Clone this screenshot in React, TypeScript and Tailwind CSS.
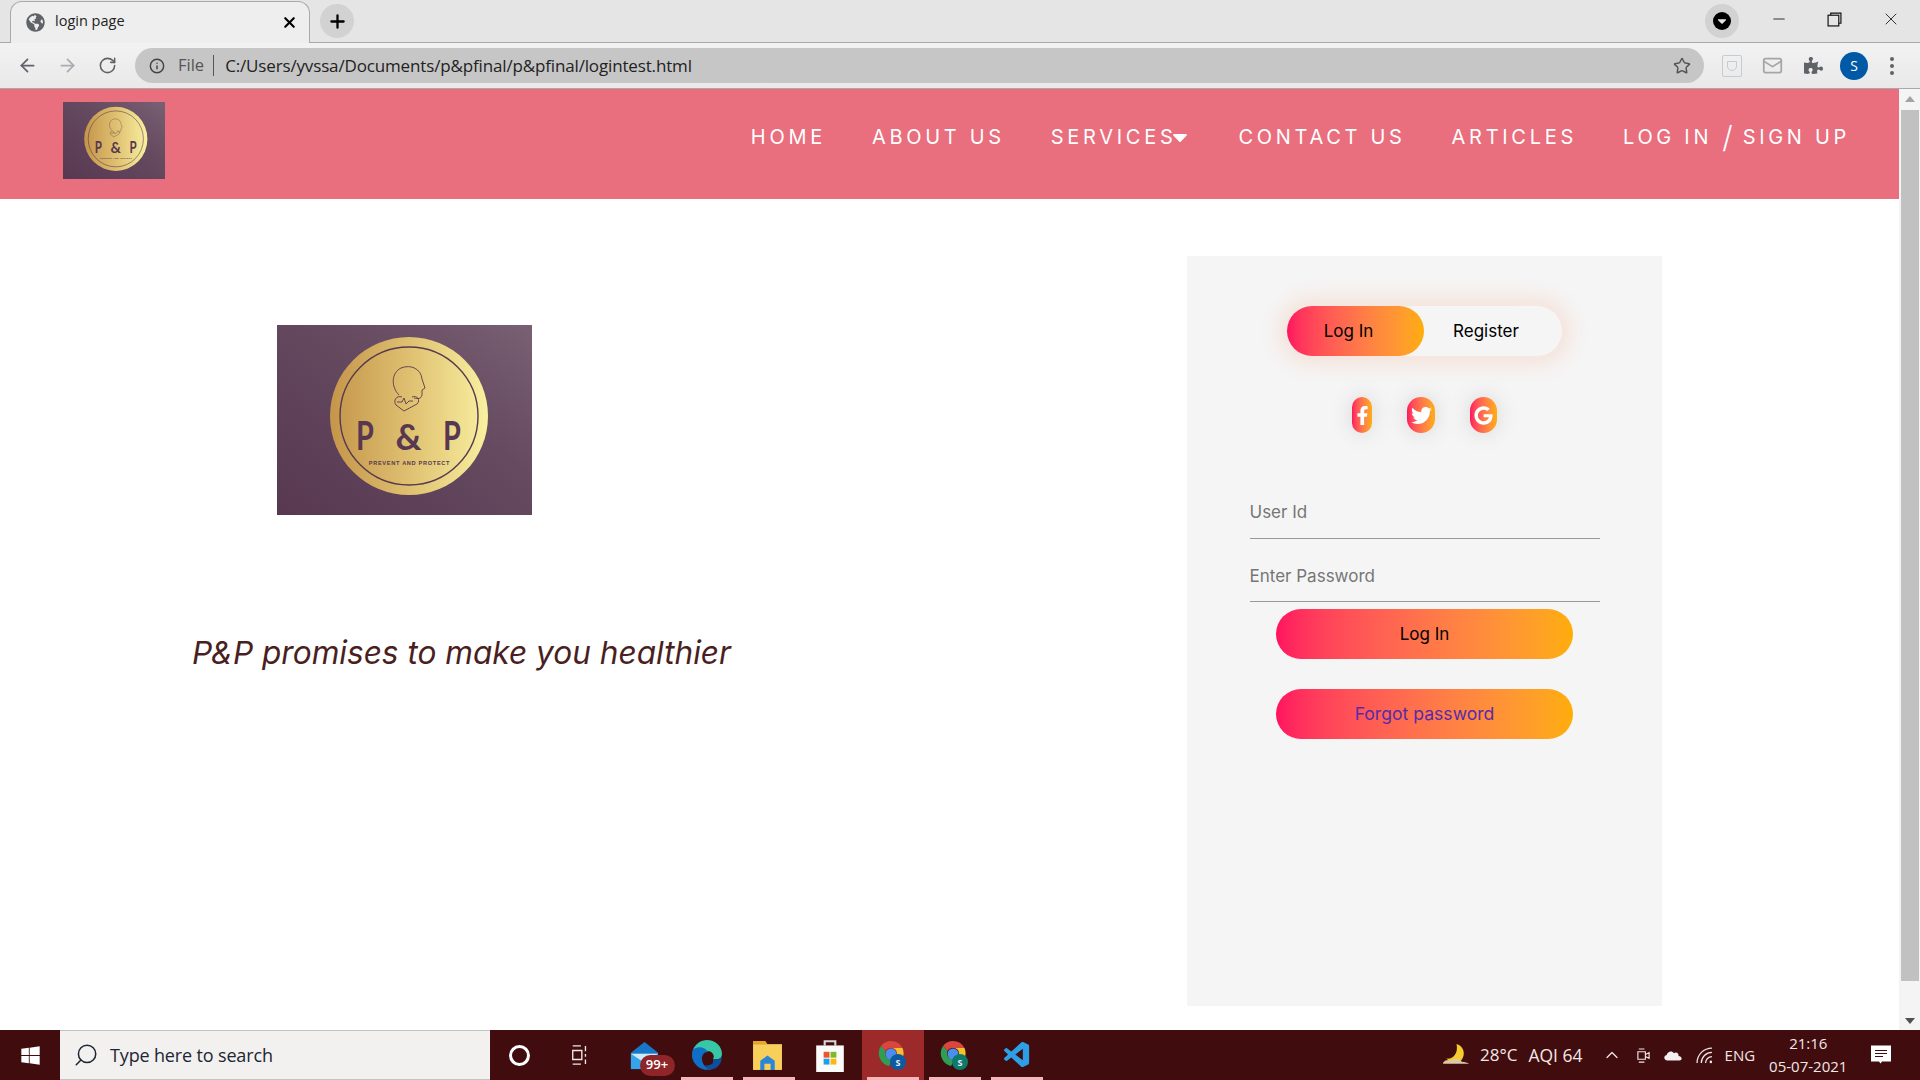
import { ArrowLeft, ArrowRight, Info, Mail, Minus, Plus, RotateCw, Search, Star, X, ChevronUp } from 'lucide-react';
import { FaCaretDown, FaFacebookF, FaGlobeAmericas, FaGoogle, FaPuzzlePiece, FaTwitter, FaWindows } from 'react-icons/fa';
import { VscVscode } from 'react-icons/vsc';

const navLinks = ['HOME', 'ABOUT US', 'SERVICES', 'CONTACT US', 'ARTICLES'];

function Logo({ className }: { className: string }) {
  return (
    <svg viewBox="0 0 255 190" className={className} preserveAspectRatio="none">
      <defs>
        <linearGradient id="logo-bg" x1="0" y1="1" x2="1" y2="0">
          <stop offset="0" stopColor="#573850" />
          <stop offset="0.6" stopColor="#654a60" />
          <stop offset="1" stopColor="#7a6073" />
        </linearGradient>
        <linearGradient id="logo-gold" x1="0" y1="0" x2="1" y2="0">
          <stop offset="0" stopColor="#c4954a" />
          <stop offset="0.5" stopColor="#dfc070" />
          <stop offset="1" stopColor="#f8f0a0" />
        </linearGradient>
      </defs>
      <rect width="255" height="190" fill="url(#logo-bg)" />
      <circle cx="132" cy="91" r="79" fill="url(#logo-gold)" />
      <circle cx="132" cy="91" r="69" fill="none" stroke="#573850" strokeWidth="1.4" />
      <path d="M122 70C114 62 114 48 124 43C134 39 144 44 145 54L148 63L145 65L145 70C144 74 141 74 137 73" fill="none" stroke="#573850" strokeWidth="0.9" />
      <path d="M125 72C119 70 116 76 119 80L127 86L140 79C144 75 140 70 135 72M120 77L125 77L127 73L129 79L132 76L136 76" fill="none" stroke="#573850" strokeWidth="0.9" />
      <text transform="translate(88 125) scale(0.72 1)" textAnchor="middle" fontFamily="Lato, sans-serif" fontWeight="700" fontSize="40" fill="#573850">P</text>
      <text x="131.5" y="125" textAnchor="middle" fontFamily="Lato, sans-serif" fontWeight="700" fontSize="36" fill="#573850">&amp;</text>
      <text transform="translate(175 125) scale(0.72 1)" textAnchor="middle" fontFamily="Lato, sans-serif" fontWeight="700" fontSize="40" fill="#573850">P</text>
      <text x="132.5" y="140" textAnchor="middle" fontFamily="'Liberation Sans', sans-serif" fontWeight="700" fontSize="5.6" letterSpacing="0.7" fill="#573850">PREVENT AND PROTECT</text>
    </svg>
  );
}

function GradientPill({ children, className }: { children: React.ReactNode; className: string }) {
  return (
    <div className={`flex items-center justify-center rounded-[30px] bg-linear-to-r from-[#ff105f] to-[#ffad06] ${className}`}>
      {children}
    </div>
  );
}

function ChromeIcon({ badge }: { badge: string }) {
  return (
    <svg viewBox="0 0 32 32" className="w-[32px] h-[32px]">
      <path d="M14 2A13 13 0 0 1 25.5 9L14 9A6 6 0 0 0 8.5 12L4 7A13 13 0 0 1 14 2Z" fill="#d9473c" />
      <path d="M25.5 9A13 13 0 0 1 19 26L20 14A6 6 0 0 0 14 9Z" fill="#f5c02e" />
      <path d="M4 7A13 13 0 0 0 12 27L16 20A6 6 0 0 1 8.5 12Z" fill="#2f9e55" />
      <circle cx="14" cy="15" r="5.5" fill="#4c8df0" />
      <circle cx="21" cy="23" r="8" fill={badge} />
      <text x="21" y="26.5" textAnchor="middle" fontSize="9" fontWeight="700" fontFamily="'Open Sans', sans-serif" fill="#e8f0f8">S</text>
    </svg>
  );
}

function Slot({ children, underline, active }: { children?: React.ReactNode; underline?: boolean; active?: boolean }) {
  return (
    <div className={`relative flex h-full w-[62px] items-center justify-center ${active ? 'bg-[#9c2a2b]' : ''}`}>
      {children}
      {underline && <div className="absolute bottom-0 left-[5px] right-[5px] h-[3px] bg-[#f4b6b6]" />}
    </div>
  );
}

function BrowserChrome() {
  return (
    <>
      <div className="flex h-[43px] shrink-0 items-end border-b border-[#a9a9a9] bg-[#e5e5e5] pl-[10px]">
        <div className="-mb-px flex h-[42px] w-[300px] items-center rounded-t-[12px] border border-b-0 border-[#a9a9a9] bg-[#eeeeee] pl-[15px] pr-[11px]">
          <FaGlobeAmericas className="h-[19px] w-[19px] text-[#5f6368]" />
          <span className="ml-[10px] font-['Open_Sans',sans-serif] text-[14.5px] leading-[18px] -mt-[3px] text-[#222]">login page</span>
          <X className="ml-auto h-[17px] w-[17px] text-black" strokeWidth={3} />
        </div>
        <div className="mb-[4px] ml-[10px] flex h-[34px] w-[34px] items-center justify-center rounded-full bg-[#d2d2d2]">
          <Plus className="h-[21px] w-[21px] text-black" strokeWidth={2.6} />
        </div>
        <div className="mb-[4px] ml-auto flex h-[34px] w-[34px] items-center justify-center rounded-full bg-[#d2d2d2]">
          <div className="flex h-[18px] w-[18px] items-center justify-center rounded-full bg-black">
            <FaCaretDown className="h-[14px] w-[14px] text-[#e5e5e5]" />
          </div>
        </div>
        <div className="mb-[6px] ml-[31px] flex h-[34px] items-center gap-[39px] pr-[19px] text-[#333]">
          <Minus className="h-[18px] w-[18px]" strokeWidth={1.4} />
          <svg viewBox="0 0 14 14" className="h-[15px] w-[15px]" fill="none" stroke="#111" strokeWidth="1.1">
            <rect x="1" y="3" width="10" height="10" />
            <path d="M3.5 3V1H13V10.5H11" />
          </svg>
          <X className="h-[20px] w-[20px]" strokeWidth={1.2} />
        </div>
      </div>
      <div className="flex h-[46px] shrink-0 items-center border-b border-[#a9a9a9] bg-linear-to-b from-[#f2f2f2] to-[#e9e9e9] pl-[17px]">
        <ArrowLeft className="h-[21px] w-[21px] text-[#5f6368]" strokeWidth={2} />
        <ArrowRight className="ml-[19px] h-[21px] w-[21px] text-[#a8abaf]" strokeWidth={2} />
        <RotateCw className="ml-[20px] h-[19px] w-[19px] text-[#5f6368]" strokeWidth={2} />
        <div className="ml-[18px] flex h-[35px] w-[1569px] items-center rounded-full bg-[#c6c6c6] pl-[14px] pr-[13px] font-['Open_Sans',sans-serif]">
          <Info className="h-[16px] w-[16px] text-[#444]" strokeWidth={2.2} />
          <span className="ml-[13px] text-[16.5px] text-[#555]">File</span>
          <div className="ml-[9px] h-[21px] w-px bg-[#555]" />
          <span className="ml-[11px] text-[17px] tracking-[-0.15px] text-[#222]">C:/Users/yvssa/Documents/p&amp;pfinal/p&amp;pfinal/logintest.html</span>
          <Star className="ml-auto h-[18px] w-[18px] text-[#555]" strokeWidth={2} />
        </div>
        <div className="ml-[18px] flex h-[22px] w-[20px] items-center justify-center rounded-[2px] border border-[#c5ccd2]">
          <div className="h-[10px] w-[10px] rounded-b-[5px] border border-[#c5ccd2]" />
        </div>
        <Mail className="ml-[20px] h-[21px] w-[21px] text-[#a5a5a5]" strokeWidth={2} />
        <FaPuzzlePiece className="ml-[21px] h-[19px] w-[19px] text-[#5f6368]" />
        <div className="ml-[17px] flex h-[28px] w-[28px] items-center justify-center rounded-full bg-[#0059a6] font-['Open_Sans',sans-serif] text-[14px] text-white">S</div>
        <div className="ml-[22px] flex flex-col gap-[3px]">
          <div className="h-[4px] w-[4px] rounded-full bg-[#5f6368]" />
          <div className="h-[4px] w-[4px] rounded-full bg-[#5f6368]" />
          <div className="h-[4px] w-[4px] rounded-full bg-[#5f6368]" />
        </div>
      </div>
    </>
  );
}

function Header() {
  return (
    <header className="flex h-[110px] shrink-0 items-start justify-between bg-[#e96e7e] pl-[63px] pr-[49px]">
      <Logo className="mt-[13px] h-[77px] w-[102px]" />
      <nav className="mt-[31px] flex h-[34px] items-center gap-[46px] font-['Inter',sans-serif] text-[20px] tracking-[3.7px] text-white">
        {navLinks.map((link) => (
          <a key={link} href="#" className="flex items-center">
            {link}
            {link === 'SERVICES' && <FaCaretDown className="-ml-[8px] h-[24px] w-[24px]" />}
          </a>
        ))}
        <a href="#" className="flex items-center">
          LOG IN<span className="mx-[10px] text-[30px] font-light leading-[28px] tracking-normal">/</span>SIGN UP
        </a>
      </nav>
    </header>
  );
}

function LoginCard() {
  return (
    <div className="mt-[57px] flex h-[750px] w-[475px] flex-col items-center bg-[#f5f5f5] pt-[50px] font-['Inter',sans-serif] text-black">
      <div className="flex h-[50px] w-[275px] rounded-[30px] shadow-[0_0_20px_9px_#ff61241f]">
        <GradientPill className="w-[137px] pr-[14px] pt-[2px] text-[17px]">Log In</GradientPill>
        <div className="flex flex-1 items-center justify-center pr-[14px] pt-[2px] text-[17px]">Register</div>
      </div>
      <div className="mt-[41px] flex gap-[35px]">
        <GradientPill className="h-[36px] w-[20px] shadow-[0_0_20px_0_#7f7f7f3d]">
          <FaFacebookF className="h-[19px] w-[19px] text-white" />
        </GradientPill>
        <GradientPill className="h-[36px] w-[28px] shadow-[0_0_20px_0_#7f7f7f3d]">
          <FaTwitter className="h-[21px] w-[21px] text-white" />
        </GradientPill>
        <GradientPill className="h-[36px] w-[27px] shadow-[0_0_20px_0_#7f7f7f3d]">
          <FaGoogle className="h-[19px] w-[19px] text-white" />
        </GradientPill>
      </div>
      <div className="mt-[65px] flex w-[350px] flex-col gap-[22px]">
        <input placeholder="User Id" className="h-[41px] w-full border-b border-[#999] bg-transparent pb-[12px] text-[17px] outline-none placeholder:text-[#757575]" />
        <input placeholder="Enter Password" className="h-[41px] w-full border-b border-[#999] bg-transparent pb-[10px] text-[17px] outline-none placeholder:text-[#757575]" />
      </div>
      <GradientPill className="mt-[7px] h-[50px] w-[297px] pt-px text-[17px]">Log In</GradientPill>
      <GradientPill className="mt-[30px] h-[50px] w-[297px] text-[17.6px] text-[#5a2aa8]">Forgot password</GradientPill>
    </div>
  );
}

function Scrollbar() {
  return (
    <div className="flex w-[21px] shrink-0 flex-col items-center bg-[#f4f4f4]">
      <div className="mt-[7px] h-0 w-0 border-x-[5px] border-b-[6px] border-x-transparent border-b-[#a3a3a3]" />
      <div className="mt-[8px] h-[871px] w-[18px] bg-[#c1c1c1]" />
      <div className="mt-auto mb-[6px] h-0 w-0 border-x-[5px] border-t-[6px] border-x-transparent border-t-[#505050]" />
    </div>
  );
}

function Taskbar() {
  return (
    <div className="flex h-[50px] shrink-0 items-center bg-[#400c0e] font-['Open_Sans',sans-serif] text-[#f3e6e6]">
      <div className="flex w-[60px] justify-center">
        <FaWindows className="h-[21px] w-[21px] text-white" />
      </div>
      <div className="flex h-full w-[430px] items-center border-y border-[#c4c4c4] bg-[#f3f0f0] pl-[13px] text-[#1c2733]">
        <Search className="h-[26px] w-[26px] -scale-x-100" strokeWidth={1.4} />
        <span className="ml-[11px] text-[18px] tracking-[-0.15px]">Type here to search</span>
      </div>
      <div className="flex h-full">
        <Slot>
          <div className="-ml-[4px] h-[21px] w-[21px] rounded-full border-[3px] border-white" />
        </Slot>
        <Slot>
          <svg viewBox="0 0 22 24" className="-ml-[6px] h-[22px] w-[20px]" fill="none" stroke="#f3e6e6" strokeWidth="1.5">
            <path d="M3 2H12M3 22H12M3 7H13V17H3ZM17 2V8M17 11V14M17 17V22" />
          </svg>
        </Slot>
        <Slot>
          <div className="relative -ml-[2px]">
            <svg viewBox="0 0 32 32" className="h-[29px] w-[31px]">
              <path d="M16 1L31 13V31H1V13Z" fill="#1778c9" />
              <path d="M1 14H31V31H1Z" fill="#35a4ea" />
              <path d="M1 14L16 24L31 14" fill="#cfe9f9" />
            </svg>
            <div className="absolute -bottom-[6px] -right-[15px] flex h-[21px] w-[35px] items-center justify-center rounded-full bg-[#8e2528] text-[13px] font-semibold text-white">99+</div>
          </div>
        </Slot>
        <Slot underline>
          <svg viewBox="0 0 32 32" className="-ml-[1px] h-[32px] w-[32px]">
            <path d="M16 1C24 1 31 7 31 15C31 20 26 21 22 20C24 17 22 12 16 12C9 12 6 17 6 22C3 18 1 14 2 11C4 5 10 1 16 1Z" fill="#37c6a6" />
            <path d="M2 11C5 7 14 7 17 13C11 13 9 20 13 26C15 29 19 31 22 30C13 33 3 28 1 18C1 15 1 13 2 11Z" fill="#0f6fc6" />
            <path d="M22 20C26 21 31 20 31 17C31 24 27 29 22 30C19 31 15 29 13 26C16 27 20 26 22 24Z" fill="#0c4f9c" />
          </svg>
        </Slot>
        <Slot underline>
          <svg viewBox="0 0 28 30" className="-ml-[3px] h-[31px] w-[29px]">
            <path d="M0 1H12L14 4H0Z" fill="#e8a628" />
            <path d="M0 4H28V29H0Z" fill="#f8cf5b" />
            <path d="M7 29V20L14 15L21 20V29H17V23H11V29Z" fill="#2c86d8" />
          </svg>
        </Slot>
        <Slot>
          <svg viewBox="0 0 28 32" className="-ml-[3px] h-[34px] w-[30px]">
            <path d="M9 7V3H19V7" fill="none" stroke="#d8d8d8" strokeWidth="2" />
            <path d="M1 7H27V32H1Z" fill="#fbfbfb" />
            <rect x="8" y="13" width="5.5" height="5.5" fill="#e8562a" />
            <rect x="14.5" y="13" width="5.5" height="5.5" fill="#7fb92b" />
            <rect x="8" y="19.5" width="5.5" height="5.5" fill="#1f9fe8" />
            <rect x="14.5" y="19.5" width="5.5" height="5.5" fill="#f9b90f" />
          </svg>
        </Slot>
        <Slot underline active>
          <ChromeIcon badge="#0d5aa0" />
        </Slot>
        <Slot underline>
          <ChromeIcon badge="#0d7a6a" />
        </Slot>
        <Slot underline>
          <VscVscode className="h-[31px] w-[31px] text-[#2c9fe6]" />
        </Slot>
      </div>
      <div className="ml-[393px] flex h-full items-center">
        <svg viewBox="0 0 28 24" className="h-[25px] w-[29px]">
          <path d="M15 1C22 3 24 11 20 16C16 20 9 19 5 15C11 16 17 11 15 1Z" fill="#f6cb2e" />
          <path d="M2 19C4 16 8 16 10 17C13 14 19 15 20 18C23 18 26 19 27 20H2Z" fill="#d9c9a8" />
        </svg>
        <span className="ml-[10px] text-[17px]">28°C</span>
        <span className="ml-[11px] text-[17.5px]">AQI 64</span>
        <ChevronUp className="ml-[19px] h-[20px] w-[20px]" strokeWidth={1.5} />
        <svg viewBox="0 0 16 20" className="ml-[14px] h-[19px] w-[15px]" fill="none" stroke="#f3e6e6" strokeWidth="1.2">
          <path d="M2 6H10V14H2ZM10 9L14 7V13L10 11M3 3H9M3 17H9" />
        </svg>
        <svg viewBox="0 0 22 14" className="ml-[12px] h-[14px] w-[20px]">
          <path d="M5 13C1 13 0 8 4 7C5 3 10 2 12 5C15 3 18 6 17 8C21 8 22 13 18 13Z" fill="#f3efef" />
        </svg>
        <svg viewBox="0 0 16 16" className="ml-[13px] h-[17px] w-[17px]" fill="none" stroke="#f3e6e6" strokeWidth="1.2">
          <path d="M1 15A14 14 0 0 1 15 1M5 15A10 10 0 0 1 15 5M9 15A6 6 0 0 1 15 9" />
          <circle cx="14" cy="14" r="1.2" fill="#f3e6e6" stroke="none" />
        </svg>
        <span className="ml-[12px] text-[15px]">ENG</span>
        <div className="ml-[14px] flex flex-col items-center text-[15px] leading-[23px]">
          <span>21:16</span>
          <span>05-07-2021</span>
        </div>
        <svg viewBox="0 0 20 20" className="ml-[24px] h-[21px] w-[20px]">
          <path d="M0 0H20V16H11L9.5 18L8 16H0Z" fill="#fff" />
          <path d="M4 5H16M4 8H16M4 11H12" stroke="#400c0e" strokeWidth="1.2" />
        </svg>
      </div>
    </div>
  );
}

export default function App() {
  return (
    <div className="flex h-screen w-full flex-col overflow-hidden bg-white">
      <BrowserChrome />
      <div className="flex min-h-0 flex-1">
        <div className="flex min-w-0 flex-1 flex-col">
          <Header />
          <main className="flex flex-1">
            <div className="w-[1187px] shrink-0 pl-[192px] pt-[126px]">
              <Logo className="ml-[85px] h-[190px] w-[255px]" />
              <p className="mt-[114px] font-['Inter',sans-serif] text-[31.6px] italic text-[#4a1f22]">P&amp;P promises to make you healthier</p>
            </div>
            <LoginCard />
          </main>
        </div>
        <Scrollbar />
      </div>
      <Taskbar />
    </div>
  );
}
